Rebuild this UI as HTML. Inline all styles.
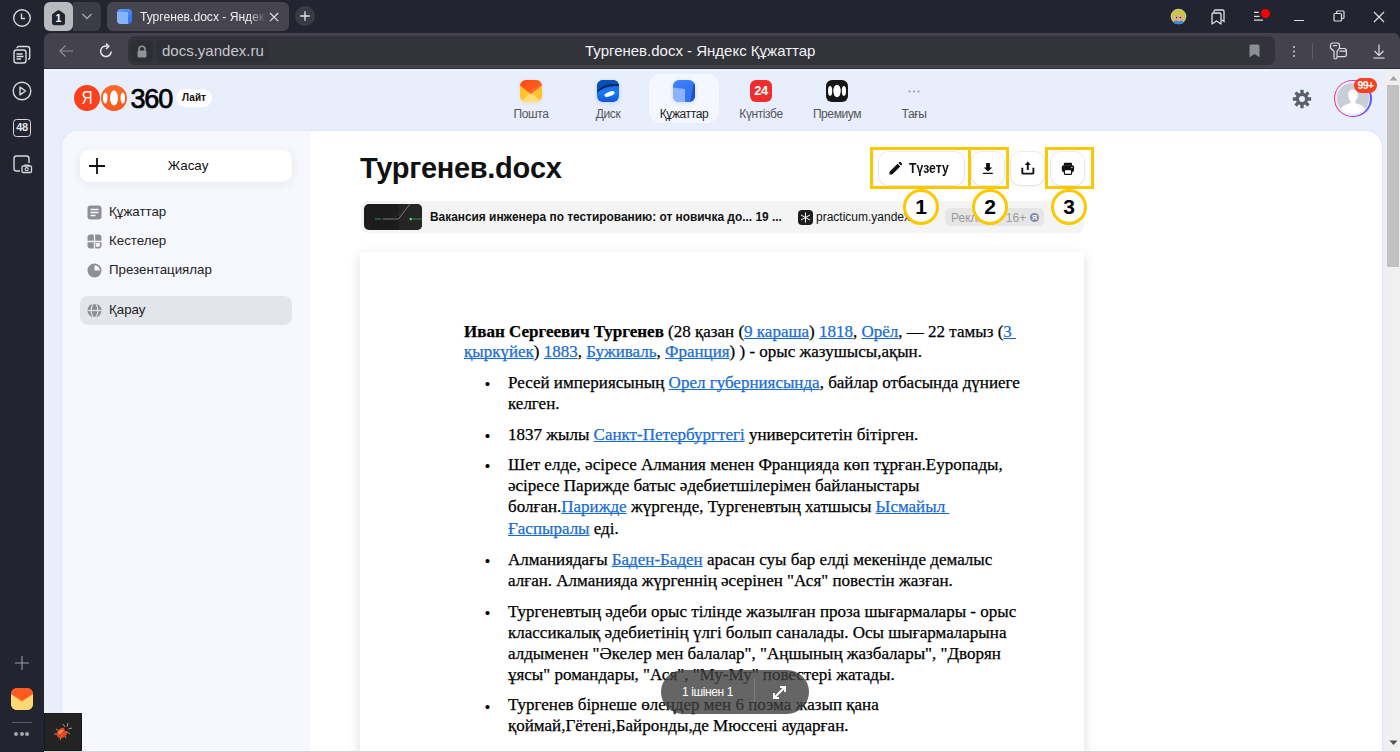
<!DOCTYPE html>
<html><head><meta charset="utf-8">
<style>
*{box-sizing:border-box;margin:0;padding:0}
html,body{width:1400px;height:752px;overflow:hidden;background:#22252f;font-family:"Liberation Sans",sans-serif}
.abs{position:absolute}
svg{display:block}
#side{left:0;top:0;width:44px;height:752px;background:#22252f}
#tabbar{left:44px;top:0;width:1356px;height:33px;background:#22252f}
#addr{left:44px;top:33px;width:1356px;height:36px;background:#44434d;border-radius:7px 7px 0 0}
#page{left:44px;top:69px;width:1356px;height:683px;background:#e8eefc;overflow:hidden}
#card{left:18px;top:62px;width:1320px;height:700px;background:#fff;border-radius:16px 16px 0 0;overflow:hidden;box-shadow:0 0 2px rgba(60,80,160,.14)}
#lpanel{left:0;top:0;width:248px;height:700px;background:#f7f8fd}
#scroll{left:1343px;top:0;width:13px;height:683px;background:#f1f1f1}
.doc{font-family:"Liberation Serif",serif;font-size:16px;color:#000}
.doc a{color:#1a6dd0;text-decoration:underline;text-decoration-skip-ink:none;text-decoration-thickness:1px;text-underline-offset:0.5px}
.nav{top:10.7px;width:64px;height:45px}
.nav .ic{position:absolute;left:21px;top:0;width:22px;height:22px;border-radius:6px}
.nav .lb{position:absolute;left:-10px;top:26px;width:84px;text-align:center;color:#555;font-size:12px;line-height:16px;white-space:nowrap;letter-spacing:-0.4px}
.it{left:47px;color:#222;font-size:13.3px;line-height:17px;white-space:nowrap}
.btn{top:20.6px;height:33px;border-radius:9px;background:#fff;box-shadow:0 0 0 1px rgba(0,0,0,.07),0 2px 4px rgba(0,0,0,.05)}
.ln{position:absolute;white-space:nowrap;line-height:20px;font-size:17px;-webkit-text-stroke:.25px currentColor}
.bl{position:absolute;line-height:20px;font-size:17px}
.circ{width:36px;height:36px;border-radius:18px;border:3.5px solid #fcc800;background:#fff;color:#000;font-size:21px;font-weight:bold;line-height:29px;text-align:center}
</style></head><body>
<!-- browser left sidebar -->
<div id="side" class="abs">
  <svg class="abs" style="left:12px;top:8px" width="20" height="20" viewBox="0 0 20 20"><circle cx="10" cy="10" r="8.3" fill="none" stroke="#d8d9de" stroke-width="1.4"/><path d="M9.5 5.5v5h3.5" fill="none" stroke="#d8d9de" stroke-width="1.4"/></svg>
  <svg class="abs" style="left:12px;top:45px" width="20" height="20" viewBox="0 0 20 20"><rect x="2" y="5" width="12" height="13" rx="2.5" fill="none" stroke="#d8d9de" stroke-width="1.4"/><path d="M5 3.2c0-1 .8-1.7 1.8-1.7h8.5c1.4 0 2.4 1 2.4 2.4v8.5c0 1-.7 1.8-1.7 1.8" fill="none" stroke="#d8d9de" stroke-width="1.4"/><path d="M4.5 9h6M4.5 11.5h7M4.5 14h4.5" stroke="#d8d9de" stroke-width="1.3"/></svg>
  <svg class="abs" style="left:12px;top:81px" width="20" height="20" viewBox="0 0 20 20"><circle cx="10" cy="10" r="8.8" fill="none" stroke="#d8d9de" stroke-width="1.4"/><path d="M8 6.2v7.6l5.6-3.8z" fill="none" stroke="#d8d9de" stroke-width="1.4" stroke-linejoin="round"/></svg>
  <div class="abs" style="left:13px;top:119px;width:18px;height:18px;border:1.4px solid #d8d9de;border-radius:3.5px;color:#e6e7ea;font-size:11px;font-weight:bold;line-height:15px;text-align:center;letter-spacing:-0.3px">48</div>
  <svg class="abs" style="left:12px;top:154px" width="21" height="20" viewBox="0 0 21 20"><path d="M8 17H4.5C3.1 17 2 15.9 2 14.5v-10C2 3.1 3.1 2 4.5 2h10C15.9 2 17 3.1 17 4.5V9" fill="none" stroke="#d8d9de" stroke-width="1.4"/><rect x="10" y="12" width="9.5" height="6.5" rx="1.2" fill="none" stroke="#d8d9de" stroke-width="1.3"/><circle cx="14.7" cy="15.2" r="1.6" fill="none" stroke="#d8d9de" stroke-width="1.1"/><path d="M12.8 12v-1h3.8v1" stroke="#d8d9de" stroke-width="1.1" fill="none"/></svg>
  <svg class="abs" style="left:14px;top:655px" width="16" height="16" viewBox="0 0 16 16"><path d="M8 1v14M1 8h14" stroke="#9a9ca4" stroke-width="1.1"/></svg>
  <div class="abs" style="left:11px;top:688px;width:22px;height:22px;border-radius:6px;background:linear-gradient(180deg,#ff5a1f 0%,#ffb13a 45%,#ffe08a 100%);overflow:hidden">
    <svg width="22" height="22" viewBox="0 0 22 22"><path d="M0 6 L11 14 L22 6 L22 22 L0 22 Z" fill="#ffd873"/><path d="M0 0H22V6L11 13 0 6Z" fill="#ff5b22"/></svg>
  </div>
  <div class="abs" style="left:12px;top:722px;width:20px;height:1px;background:#5c5e66"></div>
  <div class="abs" style="left:14px;top:732px;width:16px;height:5px">
    <div class="abs" style="left:0;top:0;width:4px;height:4px;border-radius:2px;background:#a4a6ad"></div>
    <div class="abs" style="left:6px;top:0;width:4px;height:4px;border-radius:2px;background:#a4a6ad"></div>
    <div class="abs" style="left:11px;top:0;width:4px;height:4px;border-radius:2px;background:#a4a6ad"></div>
  </div>
</div>
<!-- tab bar -->
<div id="tabbar" class="abs">
  <div class="abs" style="left:29px;top:2px;width:28px;height:29px;background:#3c3c47;border-radius:0 6px 6px 0"></div>
  <div class="abs" style="left:0;top:2px;width:29px;height:29px;background:#b9babf;border-radius:6px"></div>
  <svg class="abs" style="left:7px;top:8.5px" width="15" height="17" viewBox="0 0 15 17"><path d="M1 6.3c0-.8.4-1.5 1.1-1.9L6.4 1.5c.7-.4 1.5-.4 2.2 0l4.3 2.9c.7.4 1.1 1.1 1.1 1.9V14c0 1.2-1 2.2-2.2 2.2H3.2C2 16.2 1 15.2 1 14z" fill="#22252f"/></svg>
  <div class="abs" style="left:7px;top:10.5px;width:15px;height:14px;color:#fff;font-size:10.5px;font-weight:bold;text-align:center;line-height:15px">1</div>
  <svg class="abs" style="left:37px;top:11px" width="12" height="10" viewBox="0 0 12 10"><path d="M1.5 3l4.5 4.5L10.5 3" fill="none" stroke="#a7a8ae" stroke-width="1.3"/></svg>
  <div class="abs" style="left:63px;top:2px;width:182px;height:29px;background:#46454f;border-radius:6px"></div>
  <div class="abs" style="left:73px;top:9px;width:15px;height:15px;border-radius:4px;background:linear-gradient(135deg,#5aa0ff,#2f6ce8)"></div>
  <div class="abs" style="left:73px;top:12px;width:11px;height:12px;border-radius:0 0 0 4px;background:#85b4ff"></div>
  <div class="abs" style="left:96px;top:8.5px;width:126px;height:18px;overflow:hidden;color:#f0f0f2;font-size:12.1px;line-height:17px;white-space:nowrap;-webkit-mask-image:linear-gradient(90deg,#000 86%,transparent 100%)">Тургенев.docx - Яндекс Құжаттар</div>
  <svg class="abs" style="left:225px;top:12px" width="10" height="10" viewBox="0 0 10 10"><path d="M1 1l8.2 8.2M9.2 1L1 9.2" stroke="#e0e0e4" stroke-width="1.2"/></svg>
  <div class="abs" style="left:251px;top:6px;width:20px;height:20px;border-radius:10px;background:#3a3b45"></div>
  <svg class="abs" style="left:256px;top:11px" width="10" height="10" viewBox="0 0 10 10"><path d="M5 0.3v9.4M0.3 5h9.4" stroke="#e6e6ea" stroke-width="1.3"/></svg>
  <!-- right controls -->
  <svg class="abs" style="left:1126px;top:8px" width="17" height="17" viewBox="0 0 17 17"><circle cx="8.5" cy="8.5" r="7.8" fill="#c9c9c9"/><circle cx="8.5" cy="8.5" r="7" fill="#c9c63c"/><ellipse cx="8.5" cy="10" rx="5" ry="5" fill="#e2b08a"/><path d="M3.5 9c0-3.5 2-5.5 5-5.5s5 2 5 5.5c-1-1.8-2.5-2.6-5-2.6S4.5 7.2 3.5 9z" fill="#c9c63c"/><circle cx="6.6" cy="9.6" r=".8" fill="#333"/><circle cx="10.4" cy="9.6" r=".8" fill="#333"/><path d="M3.5 13.5l2.5-1.2 2.5 1.5 2.5-1.5 2.5 1.2-1.5 2.5h-7z" fill="#2a8fe0"/><circle cx="8.5" cy="13.8" r="1" fill="#e05a8a"/></svg>
  <svg class="abs" style="left:1165px;top:8px" width="18" height="18" viewBox="0 0 18 18"><path d="M5 4.5V3.3C5 2.6 5.6 2 6.3 2h7.4c.7 0 1.3.6 1.3 1.3v10.2l-2-1.6" fill="none" stroke="#dcdde1" stroke-width="1.3"/><path d="M3 6.2C3 5.5 3.6 5 4.3 5h6.4c.7 0 1.3.5 1.3 1.2V16l-4.5-3L3 16z" fill="none" stroke="#dcdde1" stroke-width="1.3" stroke-linejoin="round"/></svg>
  <svg class="abs" style="left:1209px;top:8px" width="20" height="16" viewBox="0 0 20 16"><path d="M1 4.4h4.7M1 8.3h5.6M1 12.1h9" stroke="#dcdde1" stroke-width="1.2"/></svg>
  <div class="abs" style="left:1216.5px;top:8.5px;width:9px;height:9px;border-radius:5px;background:#ff0000"></div>
  <div class="abs" style="left:1250px;top:20px;width:10px;height:1.3px;background:#dcdde1"></div>
  <svg class="abs" style="left:1289px;top:10px" width="12" height="12" viewBox="0 0 12 12"><rect x="1" y="3.5" width="7.5" height="7.5" rx="1" fill="none" stroke="#dcdde1" stroke-width="1.2"/><path d="M3.5 3.5V2c0-.6.4-1 1-1H10c.6 0 1 .4 1 1v5.5c0 .6-.4 1-1 1H8.5" fill="none" stroke="#dcdde1" stroke-width="1.2"/></svg>
  <svg class="abs" style="left:1329px;top:11px" width="12" height="12" viewBox="0 0 12 12"><path d="M1 1l10 10M11 1L1 11" stroke="#dcdde1" stroke-width="1.2"/></svg>
</div>
<!-- address bar -->
<div id="addr" class="abs">
  <svg class="abs" style="left:14px;top:11px" width="16" height="14" viewBox="0 0 16 14"><path d="M15 7H2M7.5 1.5L2 7l5.5 5.5" fill="none" stroke="#8e8e96" stroke-width="1.2"/></svg>
  <svg class="abs" style="left:53px;top:9px" width="18" height="18" viewBox="0 0 18 18"><path d="M14.2 9.5A5.3 5.3 0 1 1 10.5 4.2" fill="none" stroke="#e8e8ec" stroke-width="1.5"/><path d="M9 1.5l2.8 2.7L9 7" fill="none" stroke="#e8e8ec" stroke-width="1.5"/></svg>
  <div class="abs" style="left:84px;top:3px;width:1147px;height:29px;background:#33333c;border-radius:7px"></div>
  <div class="abs" style="left:87px;top:7px;width:22px;height:22px;background:#2e2e37;border-radius:6px"></div>
  <svg class="abs" style="left:92px;top:12px" width="12" height="13" viewBox="0 0 12 13"><path d="M3 6V4.3a3 3 0 0 1 6 0V6" fill="none" stroke="#8f9398" stroke-width="1.6"/><rect x="1.5" y="5.5" width="9" height="7" rx="1.5" fill="#8f9398"/></svg>
  <div class="abs" style="left:112px;top:7px;width:113px;height:22px;background:#2f2f38;border-radius:6px"></div>
  <div class="abs" style="left:118px;top:8px;color:#c6c6cb;font-size:15px;line-height:20px;white-space:nowrap">docs.yandex.ru</div>
  <div class="abs" style="left:541px;top:8px;color:#f2f2f4;font-size:15px;line-height:20px;white-space:nowrap">Тургенев.docx - Яндекс Құжаттар</div>
  <svg class="abs" style="left:1205px;top:11px" width="11" height="14" viewBox="0 0 11 14"><path d="M0.5 2.2C0.5 1.1 1.3 0.5 2.3 0.5h6.4c1 0 1.8.6 1.8 1.7V13.3L5.5 10 0.5 13.3z" fill="#8d8d95"/></svg>
  <div class="abs" style="left:1249px;top:12.5px;width:2px;height:2px;border-radius:1px;background:#d0d0d4;box-shadow:0 4.5px 0 #d0d0d4,0 9px 0 #d0d0d4"></div>
  <div class="abs" style="left:1268px;top:10px;width:1px;height:16px;background:#5e5e66"></div>
  <svg class="abs" style="left:1285px;top:9px" width="19" height="18" viewBox="0 0 19 18"><path d="M1.5 3.2C1.5 1.9 2.5 1 3.8 1H8.3C9.6 1 10.5 1.9 10.5 3.2V6L8 9.3V15.5C8 16.3 7.4 17 6.5 17S5 16.3 5 15.5V9.3L1.5 6z" fill="none" stroke="#dcdde1" stroke-width="1.2" stroke-linejoin="round"/><path d="M3.9 3.6H8.1" stroke="#dcdde1" stroke-width="1.1"/><path d="M10.3 6.5H15.3C16.5 6.5 17.4 7.4 17.4 8.6V12.5C17.4 13.7 16.5 14.6 15.3 14.6H8.2M10.3 9.2H17.4" fill="none" stroke="#dcdde1" stroke-width="1.2"/></svg>
  <svg class="abs" style="left:1329px;top:10px" width="12" height="16" viewBox="0 0 12 16"><path d="M6 1.5v11M1.5 8L6 12.5 10.5 8" fill="none" stroke="#dcdde1" stroke-width="1.2"/><path d="M0.5 15h11" stroke="#b8b9be" stroke-width="1.5"/></svg>
</div>
<!-- page -->
<div id="page" class="abs">
  <!-- HEADER -->
  <div id="hdr">
    <!-- logo -->
    <div class="abs" style="left:30px;top:16px;width:26px;height:26px;border-radius:13px;background:#fc3f1d"></div>
    <div class="abs" style="left:30px;top:16px;width:26px;height:26px;color:#fff;font-size:18px;line-height:27px;text-align:center;transform:scaleX(.85)">Я</div>
    <div class="abs" style="left:57px;top:16px;width:26px;height:26px;border-radius:13px;background:linear-gradient(180deg,#ff6a2f,#f55a1b)"></div>
    <svg class="abs" style="left:57px;top:16px" width="26" height="26" viewBox="0 0 26 26"><ellipse cx="4.2" cy="13" rx="2.3" ry="5.6" fill="#fff"/><ellipse cx="13" cy="13" rx="4" ry="7.6" fill="#fff"/><ellipse cx="21.8" cy="13" rx="2.3" ry="5.6" fill="#fff"/></svg>
    <div class="abs" style="left:86.5px;top:12.5px;color:#000;font-size:27px;line-height:34px;letter-spacing:-1.2px;-webkit-text-stroke:.7px #000">360</div>
    <div class="abs" style="left:132px;top:20px;width:36px;height:18px;border-radius:9px;background:#fff;color:#111;font-size:10px;font-weight:bold;line-height:18px;text-align:center">Лайт</div>
    <!-- nav -->
    <div class="abs" style="left:605px;top:5px;width:70px;height:49px;border-radius:12px;background:#f5f7fe"></div>
    <div class="abs nav" style="left:455px"><div class="ic" style="background:#ffc22e;overflow:hidden;box-shadow:0 1px 4px rgba(255,140,0,.15)"><svg width="22" height="22" viewBox="0 0 22 22"><defs><linearGradient id="mf" x1="0" y1="0" x2="1" y2="1"><stop offset="0" stop-color="#ff4a14"/><stop offset=".55" stop-color="#ff5a1c"/><stop offset="1" stop-color="#ff9a58"/></linearGradient></defs><path d="M0 22L11 12.5 22 22z" fill="#ffdc78"/><path d="M0 0H22V5.5L11 14.3 0 5.5z" fill="url(#mf)"/></svg></div><div class="lb">Пошта</div></div>
    <div class="abs nav" style="left:532px"><div class="ic" style="background:linear-gradient(180deg,#1660d8,#1a78f5 60%,#0e58d0);overflow:hidden;box-shadow:0 1px 4px rgba(20,90,230,.2)"><svg width="22" height="22" viewBox="0 0 22 22"><path d="M0 0H22V4C14 3 5 5 0 11z" fill="#0b4fb8"/><path d="M0 11C5 5 12 3.5 22 4.2V6C13 5.5 5 7.5 0 13z" fill="#072a66"/><ellipse cx="12.5" cy="14" rx="5.3" ry="2.2" transform="rotate(-20 12.5 14)" fill="#fff"/></svg></div><div class="lb">Диск</div></div>
    <div class="abs nav" style="left:608px"><div class="ic" style="background:linear-gradient(160deg,#3f86fb,#2a62e0);overflow:hidden;box-shadow:0 1px 4px rgba(40,100,240,.2)"><svg width="22" height="22" viewBox="0 0 22 22"><path d="M0 7.5L12 9V22H0Z" fill="#8db3ff"/><path d="M12 9L20.5 4 17.5 22H12z" fill="#3574f2"/><path d="M20.5 4L22 3.5V22H17.5z" fill="#1d50c8"/></svg></div><div class="lb" style="color:#222">Құжаттар</div></div>
    <div class="abs nav" style="left:685px"><div class="ic" style="background:#f02d2d;color:#fff;font-weight:bold;font-size:13px;line-height:22px;text-align:center;letter-spacing:-0.5px">24</div><div class="lb">Күнтізбе</div></div>
    <div class="abs nav" style="left:761px"><div class="ic" style="background:#161616"><svg width="22" height="22" viewBox="0 0 22 22"><ellipse cx="4.1" cy="11" rx="2.1" ry="4.9" fill="#fff"/><ellipse cx="11" cy="11" rx="3.7" ry="6.2" fill="#fff"/><ellipse cx="17.9" cy="11" rx="2.1" ry="4.9" fill="#fff"/></svg></div><div class="lb">Премиум</div></div>
    <div class="abs nav" style="left:838px"><div class="ic"><svg width="22" height="22" viewBox="0 0 22 22"><circle cx="6.5" cy="11.5" r="1.1" fill="#9a9ba3"/><circle cx="11" cy="11.5" r="1.1" fill="#9a9ba3"/><circle cx="15.5" cy="11.5" r="1.1" fill="#9a9ba3"/></svg></div><div class="lb">Тағы</div></div>
    <!-- gear -->
    <svg class="abs" style="left:1248px;top:20px" width="20" height="20" viewBox="0 0 20 20"><g fill="#5d5e66"><circle cx="10" cy="10" r="6.2"/><g id="t"><rect x="8.3" y="0.8" width="3.4" height="4" rx=".6"/><rect x="8.3" y="15.2" width="3.4" height="4" rx=".6"/></g><use href="#t" transform="rotate(45 10 10)"/><use href="#t" transform="rotate(90 10 10)"/><use href="#t" transform="rotate(135 10 10)"/></g><circle cx="10" cy="10" r="3" fill="#e8eefc"/></svg>
    <!-- avatar -->
    <div class="abs" style="left:1290px;top:10.5px;width:37.7px;height:37.7px;border-radius:50%;background:conic-gradient(from 0deg,#c040e0,#6a4cff 80deg,#4a5cff 110deg,#8a3ae8 160deg,#d02aa8 200deg,#ff2a5a 260deg,#ff3070 300deg,#e040c0 340deg,#c040e0)"></div>
    <div class="abs" style="left:1291.4px;top:11.9px;width:34.9px;height:34.9px;border-radius:50%;background:#eaf0fc"></div>
    <div class="abs" style="left:1293.1px;top:13.6px;width:31.5px;height:31.5px;border-radius:50%;background:#c9cdd8;overflow:hidden"><svg width="32" height="32" viewBox="0 0 32 32"><path d="M15.8 6.5c-3 0-4.6 2.3-4.6 5.2 0 1.6.3 3 .9 4.1.6 1.3 1.5 2.3 1.5 3.3v1.2c-3.8.8-8 2.2-9.3 5.2L6 32h20l1.5-6.5c-1.3-3-5.4-4.4-9.2-5.2v-1.2c0-1 .9-2 1.5-3.3.6-1.1.9-2.5.9-4.1 0-2.9-1.8-5.2-4.9-5.2z" fill="#fff"/></svg></div>
    <div class="abs" style="left:1310px;top:9px;width:23px;height:14.5px;border-radius:7.5px;background:#fc3f1d;color:#fff;font-size:10.5px;font-weight:bold;line-height:14.5px;text-align:center;letter-spacing:-0.6px">99+</div>
  </div>
  <div id="card" class="abs">
    <div id="lpanel" class="abs">
      <div class="abs" style="left:18px;top:19px;width:212px;height:32px;border-radius:9px;background:#fff;box-shadow:0 2px 10px rgba(20,30,80,.08)"></div>
      <svg class="abs" style="left:26px;top:26px" width="18" height="18" viewBox="0 0 18 18"><path d="M9 1v16M1 9h16" stroke="#111" stroke-width="1.8"/></svg>
      <div class="abs" style="left:20px;top:26.3px;width:212px;text-align:center;color:#111;font-size:13.4px;line-height:18px">Жасау</div>
      <svg class="abs" style="left:25px;top:74px" width="15" height="15" viewBox="0 0 15 15"><rect x="0.5" y="0.5" width="14" height="14" rx="3" fill="#8e8f97"/><path d="M3.5 4.5h8M3.5 7.5h8M3.5 10.5h5" stroke="#f7f8fd" stroke-width="1.4"/></svg>
      <div class="abs it" style="top:72px">Құжаттар</div>
      <svg class="abs" style="left:25px;top:103px" width="15" height="15" viewBox="0 0 15 15"><rect x="0.5" y="0.5" width="14" height="14" rx="3" fill="#8e8f97"/><path d="M7.5 0v15M0 7.5h15" stroke="#f7f8fd" stroke-width="1.3"/><rect x="8.9" y="8.9" width="3.9" height="3.9" rx=".6" fill="#f7f8fd"/></svg>
      <div class="abs it" style="top:101px">Кестелер</div>
      <svg class="abs" style="left:25px;top:132px" width="15" height="15" viewBox="0 0 15 15"><circle cx="7.5" cy="7.5" r="7" fill="#8e8f97"/><path d="M7.5 2.2A5.3 5.3 0 0 1 12.8 7.5H7.5z" fill="#f7f8fd"/></svg>
      <div class="abs it" style="top:130px">Презентациялар</div>
      <div class="abs" style="left:18px;top:165px;width:212px;height:29px;border-radius:8px;background:#e3e5ec"></div>
      <svg class="abs" style="left:25px;top:172px" width="15" height="15" viewBox="0 0 15 15"><circle cx="7.5" cy="7.5" r="7" fill="#8e8f97"/><path d="M0.5 7.5h14" stroke="#e3e5ec" stroke-width="1.2"/><ellipse cx="7.5" cy="7.5" rx="3.3" ry="7.2" fill="none" stroke="#e3e5ec" stroke-width="1.1"/></svg>
      <div class="abs it" style="top:170px">Қарау</div>
    </div>
    <!-- main -->
    <div class="abs" style="left:298px;top:19px;color:#111;font-size:29px;font-weight:bold;line-height:36px;letter-spacing:-0.3px">Тургенев.docx</div>
    <div class="abs btn" style="left:817px;width:85px"><svg class="abs" style="left:10px;top:10px" width="13" height="13" viewBox="0 0 13 13"><path d="M0.5 12.5V9.8L8.6 1.7l2.7 2.7-8.1 8.1z" fill="#111"/><path d="M9.4 0.9l.9-.9c.3-.3.8-.3 1.1 0l1.6 1.6c.3.3.3.8 0 1.1l-.9.9z" fill="#111"/></svg><div class="abs" style="left:30px;top:7px;color:#111;font-size:14px;font-weight:bold;line-height:18px;transform:scaleX(.87);transform-origin:0 0">Түзету</div></div>
    <div class="abs btn" style="left:910px;width:32px"><svg class="abs" style="left:8px;top:9.4px" width="16" height="16" viewBox="0 0 16 16"><path d="M6.1 2h3.8v4.6h2.4L8 10.6 3.7 6.6h2.4z" fill="#111"/><rect x="2.9" y="11.7" width="10" height="1.4" rx=".5" fill="#111"/></svg></div>
    <div class="abs btn" style="left:949px;width:33px"><svg class="abs" style="left:9px;top:8.4px" width="16" height="16" viewBox="0 0 16 16"><path d="M7.8 10V3.5" stroke="#111" stroke-width="1.9"/><path d="M4.8 5L7.8 1.6 10.8 5z" fill="#111"/><path d="M2.3 7.8v4.9c0 .5.4.9.9.9h9.3c.5 0 .9-.4.9-.9V7.8" fill="none" stroke="#111" stroke-width="1.9"/></svg></div>
    <div class="abs btn" style="left:989px;width:33px"><svg class="abs" style="left:9px;top:9.4px" width="16" height="16" viewBox="0 0 16 16"><path d="M3.8 4.6V2.9c0-.7.5-1.2 1.2-1.2h5.8c.7 0 1.2.5 1.2 1.2v1.7z" fill="#111"/><rect x="1.8" y="4.2" width="12.3" height="6.8" rx="2" fill="#111"/><rect x="4.4" y="8.6" width="7.2" height="4.8" rx=".9" fill="#fff" stroke="#111" stroke-width="1.2"/><circle cx="11.9" cy="6.6" r=".7" fill="#fff"/></svg></div>
    <!-- ad bar -->
    <div class="abs" style="left:299px;top:70px;width:723px;height:32px;border-radius:7px;background:#f4f4f4"></div>
    <div class="abs" style="left:302px;top:73px;width:58px;height:26px;border-radius:5px;background:#1c1c1c;overflow:hidden"><svg width="58" height="26" viewBox="0 0 58 26"><rect x="35" y="0" width="23" height="26" fill="#252525"/><path d="M18.5 15H34.5L46 0" fill="none" stroke="#7a7a7a" stroke-width="1"/><circle cx="46.8" cy="15" r="1.3" fill="#4be08a"/><path d="M48.5 15H58M11 15H17" stroke="#2f8a55" stroke-width="1"/><path d="M31 15a5 5 0 0 1 5-5" stroke="#333" stroke-width=".8" fill="none"/></svg></div>
    <div class="abs" style="left:368px;top:78px;color:#111;font-size:11.9px;font-weight:bold;line-height:16px;white-space:nowrap">Вакансия инженера по тестированию: от новичка до... 19 ...</div>
    <div class="abs" style="left:736px;top:79px;width:15px;height:15px;border-radius:4px;background:#1e1e1e"><svg width="15" height="15" viewBox="0 0 15 15"><path d="M7.5 2.5v10M3 5l9 5M12 5l-9 5" stroke="#fff" stroke-width="1"/></svg></div>
    <div class="abs" style="left:754px;top:78px;color:#111;font-size:12px;line-height:16px;white-space:nowrap">practicum.yandex</div>
    <div class="abs" style="left:883px;top:77px;width:99px;height:18px;border-radius:5px;background:#e6e6e6"></div>
    <div class="abs" style="left:889px;top:78.5px;color:#9a9a9a;font-size:12px;line-height:17px;white-space:nowrap">Реклама&nbsp; 16+</div>
    <div class="abs" style="left:968px;top:82px;width:9px;height:9px;border-radius:5px;background:#7f8aa6;color:#fff;font-size:7px;line-height:9px;text-align:center;font-weight:bold">Я</div>
    <!-- doc page -->
    <div class="abs doc" id="docpage" style="left:298px;top:121px;width:724px;height:700px;background:#fff;box-shadow:0 4px 11px rgba(0,0,0,.14)">
      <div class="ln" style="left:104px;top:69.5px"><b>Иван Сергеевич Тургенев</b> (28 қазан (<a>9 караша</a>) <a>1818</a>, <a>Орёл</a>, — 22 тамыз (<a>3&nbsp;</a></div>
      <div class="ln" style="left:104px;top:90.1px"><a>қыркүйек</a>) <a>1883</a>, <a>Буживаль</a>, <a>Франция</a>) ) - орыс жазушысы,ақын.</div>
      <div class="ln" style="left:148px;top:121.1px">Ресей империясының <a>Орел губерниясында</a>, байлар отбасында дүниеге</div>
      <div class="bl" style="left:124.6px;top:123.2px">•</div>
      <div class="ln" style="left:148px;top:142.1px">келген.</div>
      <div class="ln" style="left:148px;top:173.1px">1837 жылы <a>Санкт-Петербургтегі</a> университетін бітірген.</div>
      <div class="bl" style="left:124.6px;top:175.2px">•</div>
      <div class="ln" style="left:148px;top:203.1px">Шет елде, әсіресе Алмания менен Францияда көп тұрған.Еуропады,</div>
      <div class="bl" style="left:124.6px;top:205.2px">•</div>
      <div class="ln" style="left:148px;top:224.1px">әсіресе Парижде батыс әдебиетшілерімен байланыстары</div>
      <div class="ln" style="left:148px;top:245.4px">болған.<a>Парижде</a> жүргенде, Тургеневтың хатшысы <a>Ысмайыл&nbsp;</a></div>
      <div class="ln" style="left:148px;top:266.7px"><a>Ғаспыралы</a> еді.</div>
      <div class="ln" style="left:148px;top:297.8px">Алманиядағы <a>Баден-Баден</a> арасан суы бар елді мекенінде демалыс</div>
      <div class="bl" style="left:124.6px;top:299.9px">•</div>
      <div class="ln" style="left:148px;top:318.8px">алған. Алманияда жүргеннің әсерінен "Ася" повестін жазған.</div>
      <div class="ln" style="left:148px;top:349.7px">Тургеневтың әдеби орыс тілінде жазылған проза шығармалары - орыс</div>
      <div class="bl" style="left:124.6px;top:351.8px">•</div>
      <div class="ln" style="left:148px;top:370.7px">классикалық әдебиетінің үлгі болып саналады. Осы шығармаларына</div>
      <div class="ln" style="left:148px;top:391.7px">алдыменен "Әкелер мен балалар", "Аңшының жазбалары", "Дворян</div>
      <div class="ln" style="left:148px;top:412.7px">ұясы" романдары, "Ася", "Му-Му" повестері жатады.</div>
      <div class="ln" style="left:148px;top:443.4px">Тургенев бірнеше өлеңдер мен 6 поэма жазып қана</div>
      <div class="bl" style="left:124.6px;top:445.5px">•</div>
      <div class="ln" style="left:148px;top:464.4px">қоймай,Гётені,Байронды,де Мюссені аударған.</div>
      <div class="ln" style="left:148px;top:497.1px">"Аңшының жазбалары" "Дворян ұясы" "Әкелер мен балалар"</div>
      <div class="bl" style="left:124.6px;top:499.2px">•</div>
    </div>

  </div>
  
</div>
<!-- scrollbar -->
<div class="abs" style="left:44px;top:68px;width:1356px;height:1px;background:#30303a"></div>
<div class="abs" style="left:44px;top:70px;width:1341px;height:1px;background:#f3f7ff"></div>
<div class="abs" style="left:44px;top:69px;width:1px;height:683px;background:#eef0f4"></div>
<div class="abs" style="left:1385px;top:69px;width:15px;height:683px;background:#f0f0f0"></div>
<div class="abs" style="left:1387px;top:85px;width:12px;height:182px;background:#c1c1c1"></div>
<svg class="abs" style="left:1389px;top:75px" width="9" height="6" viewBox="0 0 9 6"><path d="M0.5 5.5L4.5 1l4 4.5z" fill="#a3a3a3"/></svg>
<svg class="abs" style="left:1389px;top:740px" width="9" height="6" viewBox="0 0 9 6"><path d="M0.5 0.5h8L4.5 5z" fill="#505050"/></svg>
<div class="abs" style="left:44px;top:751px;width:1356px;height:1px;background:#d6d6d8"></div>
<!-- bug -->
<div class="abs" style="left:44px;top:713px;width:38px;height:38px;background:#232323;border:1px solid #1a1a1a"></div>
<svg class="abs" style="left:51px;top:720px" width="24" height="24" viewBox="0 0 24 24"><g stroke="#cfcfcf" stroke-width=".7"><path d="M14 7l-2-3M16 7l1-4M17 9l4-1M8 11l-3-2M7 14l-4 0M10 17l-1 3M13 15l2 3M16 12l3 2"/></g><ellipse cx="11" cy="13" rx="4.6" ry="6" transform="rotate(50 11 13)" fill="#e8461e"/><ellipse cx="10" cy="12" rx="2" ry="3" transform="rotate(50 10 12)" fill="#ff9a6a" opacity=".7"/><circle cx="15.5" cy="8.8" r="2.2" fill="#3a1a10"/><path d="M7.5 16.5L14 10" stroke="#8a2a10" stroke-width=".6"/></svg>
<!-- pager -->
<div class="abs" style="left:661px;top:670px;width:148px;height:44px;border-radius:22px;background:rgba(62,62,62,.8)"></div>
<div class="abs" style="left:682px;top:684px;color:#fff;font-size:12px;line-height:16px;white-space:nowrap;letter-spacing:-0.4px">1 ішінен 1</div>
<div class="abs" style="left:754px;top:678px;width:1px;height:24px;background:rgba(255,255,255,.14)"></div>
<svg class="abs" style="left:772px;top:685px" width="15" height="15" viewBox="0 0 15 15"><path d="M2 13L13 2M8 2h5v5M2 8v5h5" fill="none" stroke="#fff" stroke-width="1.8"/></svg>
<!-- annotations -->
<div class="abs" style="left:870px;top:147px;width:101px;height:42px;border:3px solid #fcc800"></div>
<div class="abs" style="left:968px;top:147px;width:41px;height:42px;border:3px solid #fcc800"></div>
<div class="abs" style="left:1045px;top:147px;width:49px;height:42px;border:3px solid #fcc800"></div>
<div class="abs circ" style="left:903px;top:189px">1</div>
<div class="abs circ" style="left:972px;top:189px">2</div>
<div class="abs circ" style="left:1051px;top:189px">3</div>
</body></html>
